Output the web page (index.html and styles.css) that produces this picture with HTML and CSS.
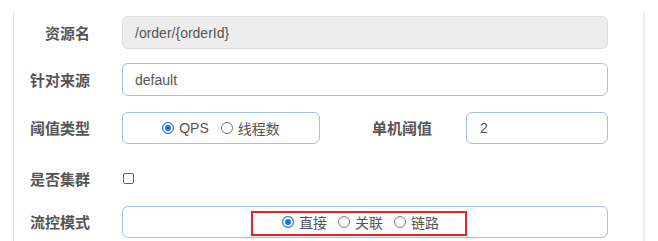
FILE: index.html
```html
<!DOCTYPE html>
<html lang="zh-CN">

<head>
    <meta charset="UTF-8">
    <title>流控规则</title>
    <link rel="stylesheet" href="styles.css">
</head>

<body>

    <!-- Formulier -->
    <div class="panel">
        <div class="row">
            <label class="label">资源名</label>
            <div class="field disabled">/order/{orderId}</div>
        </div>
        <div class="row row2">
            <label class="label">针对来源</label>
            <div class="field">default</div>
        </div>
        <div class="row">
            <label class="label">阈值类型</label>
            <div class="field box-small">
                <span class="choice"><span class="radio on"></span>QPS</span>
                <span class="choice"><span class="radio"></span>线程数</span>
            </div>
            <label class="label label-right">单机阈值</label>
            <div class="field field-small">2</div>
        </div>
        <div class="row row-check">
            <label class="label">是否集群</label>
            <span class="checkbox"></span>
        </div>
        <div class="row row-last">
            <label class="label">流控模式</label>
            <div class="field box-wide">
                <span class="choice"><span class="radio on"></span>直接</span>
                <span class="choice"><span class="radio"></span>关联</span>
                <span class="choice"><span class="radio"></span>链路</span>
                <div class="mark"></div>
            </div>
        </div>
    </div>

</body>

</html>
```

FILE: styles.css
```css
/* Basis */
body {
    margin: 0;
    background: #fff;
    font-family: "Liberation Sans", "Noto Sans CJK SC", sans-serif;
    color: #555;
}

.panel {
    margin: 12px 0 0 13px;
    width: 632px;
    height: 229px;
    padding-top: 4px;
    box-sizing: border-box;
    border-left: 1px solid #e6e6e6;
    border-right: 2px solid #ececec;
}

.row {
    display: flex;
    align-items: center;
    height: 33px;
    margin-bottom: 14px;
}

.row2 {
    margin-bottom: 15px;
}

.row-check {
    height: 20px;
    margin-top: 24px;
    margin-bottom: 17px;
}

.row-last {
    margin-bottom: 0;
}

.label {
    width: 76px;
    margin-right: 32px;
    text-align: right;
    font-family: "Noto Sans CJK SC", sans-serif;
    font-size: 15px;
    font-weight: bold;
    color: #555;
}

.label-right {
    width: 112px;
    margin-right: 34px;
}

/* Invoervelden */
.field {
    width: 486px;
    height: 33px;
    box-sizing: border-box;
    border: 1px solid #9fc1e4;
    border-radius: 6px;
    padding: 0 12px;
    display: flex;
    align-items: center;
    font-size: 14px;
    color: #555;
}

.disabled {
    background: #ededed;
    border-color: #dcdcdc;
}

.box-small {
    width: 198px;
    height: 32px;
    justify-content: center;
    gap: 12px;
}

.field-small {
    width: 142px;
    height: 32px;
    padding-left: 13px;
}

.box-wide {
    position: relative;
    height: 32px;
    justify-content: center;
    gap: 11px;
    padding-left: 0;
    padding-right: 9px;
}

/* Keuzerondjes */
.choice {
    display: flex;
    align-items: center;
    font-family: "Liberation Sans", "Noto Sans CJK SC", sans-serif;
    font-size: 14px;
    color: #555;
}

.radio {
    width: 12px;
    height: 12px;
    box-sizing: border-box;
    border: 1px solid #7a7a7a;
    border-radius: 50%;
    margin-right: 5px;
}

.radio.on {
    border-color: #1976e8;
    background: #1976e8;
    box-shadow: inset 0 0 0 2px #fff;
}

.checkbox {
    width: 11px;
    height: 11px;
    box-sizing: border-box;
    border: 1px solid #666;
    border-radius: 2px;
    margin-left: 1px;
}

/* Rode markering */
.mark {
    position: absolute;
    left: 128px;
    top: 4px;
    width: 216px;
    height: 25px;
    box-sizing: border-box;
    border: 2px solid #e2232a;
}
```
